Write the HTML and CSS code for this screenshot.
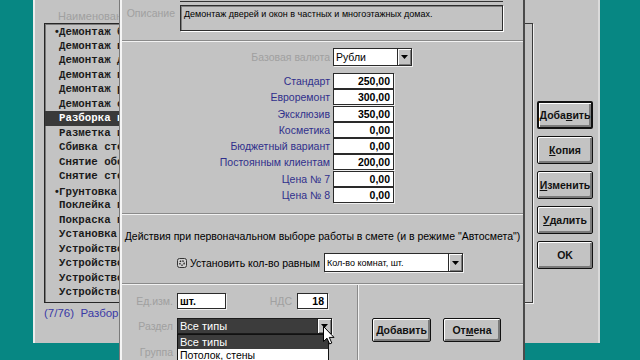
FILE: index.html
```html
<!DOCTYPE html>
<html lang="ru">
<head>
<meta charset="utf-8">
<title>Работы</title>
<link rel="stylesheet" href="styles.css">
</head>
<body>
<div class="desktop">
  <div class="win back">
    <div class="list-col">
      <div class="col-head">Наименован</div>
      <div class="listbox">
        <div class="item"><span class="dot">•</span>Демонтаж б</div>
        <div class="item">Демонтаж в</div>
        <div class="item">Демонтаж д</div>
        <div class="item">Демонтаж п</div>
        <div class="item">Демонтаж р</div>
        <div class="item">Демонтаж с</div>
        <div class="item sel">Разборка п</div>
        <div class="item">Разметка и</div>
        <div class="item">Сбивка сте</div>
        <div class="item">Снятие обо</div>
        <div class="item">Снятие сте</div>
        <div class="item"><span class="dot">•</span>Грунтовка</div>
        <div class="item">Поклейка п</div>
        <div class="item">Покраска п</div>
        <div class="item">Установка</div>
        <div class="item">Устройство</div>
        <div class="item">Устройство</div>
        <div class="item">Устройство</div>
        <div class="item">Устройство</div>
      </div>
      <div class="status">(7/76)&nbsp; Разбор</div>
    </div>
    <div class="frame"></div>
    <div class="btn-col">
      <div class="btn def">Доба<u>в</u>ить</div>
      <div class="btn"><u>К</u>опия</div>
      <div class="btn"><u>И</u>зменить</div>
      <div class="btn"><u>У</u>далить</div>
      <div class="btn">OK</div>
    </div>
  </div>

  <div class="win dlg">
    <div class="sec-top">
      <div class="name-stub"></div>
      <div class="desc-row">
        <div class="lbl dis">Описание</div>
        <div class="memo">Демонтаж дверей и окон в частных и многоэтажных домах.</div>
      </div>
    </div>
    <div class="sep"></div>
    <div class="prices">
      <div class="cur-row">
        <div class="lbl dis">Базовая валюта</div>
        <div class="combo cur"><span class="val">Рубли</span><span class="arr"><svg width="7" height="4" viewBox="0 0 7 4"><path d="M0 0H7L3.5 4Z" fill="#000"/></svg></span></div>
      </div>
      <div class="pgrid">
        <div class="lbl blue">Стандарт</div><div class="num">250,00</div>
        <div class="lbl blue">Евроремонт</div><div class="num">300,00</div>
        <div class="lbl blue">Эксклюзив</div><div class="num">350,00</div>
        <div class="lbl blue">Косметика</div><div class="num">0,00</div>
        <div class="lbl blue">Бюджетный вариант</div><div class="num">0,00</div>
        <div class="lbl blue">Постоянным клиентам</div><div class="num">200,00</div>
        <div class="lbl blue">Цена № 7</div><div class="num">0,00</div>
        <div class="lbl blue">Цена № 8</div><div class="num">0,00</div>
      </div>
    </div>
    <div class="sep"></div>
    <div class="actions">
      <p class="act-title">Действия при первоначальном выборе работы в смете (и в режиме "Автосмета")</p>
      <div class="chk-row">
        <svg class="chk" width="10" height="10" viewBox="0 0 10 10"><rect x="0.5" y="0.5" width="9" height="9" rx="2" fill="#d0d0d0" stroke="#333"/><circle cx="5" cy="5" r="2.2" fill="none" stroke="#222" stroke-width="1.3" stroke-dasharray="1.4 1"/></svg>
        <span class="chk-lbl">Установить кол-во равным</span>
        <div class="combo qty"><span class="val">Кол-во комнат, шт.</span><span class="arr"><svg width="7" height="4" viewBox="0 0 7 4"><path d="M0 0H7L3.5 4Z" fill="#000"/></svg></span></div>
      </div>
    </div>
    <div class="sep"></div>
    <div class="bottom">
      <div class="b-left">
        <div class="brow">
          <div class="lbl dis w53">Ед.изм.</div>
          <div class="field unit">шт.</div>
          <div class="lbl dis vat-lbl">НДС</div>
          <div class="field vat">18</div>
        </div>
        <div class="brow r2">
          <div class="lbl dis w53">Раздел</div>
          <div class="combo dark"><span class="val">Все типы</span><span class="arr"><svg width="7" height="4" viewBox="0 0 7 4"><path d="M0 0H7L3.5 4Z" fill="#000"/></svg></span></div>
        </div>
        <div class="brow r3">
          <div class="lbl dis w53">Группа</div>
        </div>
        <div class="droplist">
          <div class="opt on">Все типы</div>
          <div class="opt">Потолок, стены</div>
        </div>
      </div>
      <div class="vsep"></div>
      <div class="b-right">
        <div class="btn sm"><u>Д</u>обавить</div>
        <div class="btn sm">От<u>м</u>ена</div>
      </div>
    </div>
  </div>

  <svg class="cursor" width="12" height="19" viewBox="0 0 12 19"><path d="M0.5 0.5V15.5L4 12.2L6.6 18L8.8 17L6.3 11.4H11Z" fill="#fff" stroke="#000" stroke-width="1"/></svg>
</div>
</body>
</html>
```

FILE: styles.css
```css
* { box-sizing: border-box; }
html, body { margin: 0; padding: 0; }
body {
  width: 640px; height: 360px; overflow: hidden;
  background: #078783;
  font-family: "Liberation Sans", Arial, sans-serif;
  font-size: 10.5px; color: #000;
}
.desktop { position: relative; width: 640px; height: 360px; overflow: hidden; background: #078783; }
.win { position: absolute; background: #c3c3c3; }

/* back window */
.back {
  left: 33px; top: 0; width: 567px; height: 343px;
  display: flex;
  box-shadow: inset 2px 0 #ececec, inset -2px 0 #dadada;
}
.list-col { margin-left: 11px; width: 82px; flex: none; overflow: hidden; }
.col-head { height: 23px; padding: 10px 0 0 14px; line-height: 13px; color: #a0a0a0; font-size: 11px; white-space: nowrap; overflow: hidden; }
.listbox {
  width: 100px; height: 280px; border: 1px solid #262626;
  box-shadow: inset 1px 1px #7a7a7a;
  font-family: "Liberation Mono", "Courier New", monospace;
  font-weight: bold; font-size: 10.75px; overflow: hidden;
  color: #1a1a1a;
}
.item { height: 14.5px; line-height: 14.5px; padding-left: 14px; white-space: nowrap; overflow: hidden; }
.dot { display: inline-block; width: 4px; margin-left: -4px; font-family: "Liberation Sans", sans-serif; }
.item.sel { background: #3a3a3a; color: #fff; }
.status { margin-top: 3px; line-height: 14px; color: #3a3aa6; font-size: 11.5px; white-space: nowrap; }
.frame {
  flex: none; margin-left: 9px; width: 398px; margin-top: 23px; height: 280px;
  border: 1px solid #3a3a3a; box-shadow: 1px 1px #f0f0f0;
}
.btn-col { flex: none; margin-left: 4px; width: 56px; padding-top: 101px; display: flex; flex-direction: column; gap: 7px; }
.btn {
  height: 28px; width: 56px;
  display: flex; align-items: center; justify-content: center;
  font-weight: bold; font-size: 10.5px; color: #111;
  border: 1px solid #111; border-radius: 2px; background: #c3c3c3;
  box-shadow: inset 1px 1px #fff, inset -2px -2px #7b7b7b;
}
.btn.def { border-width: 2px; }
.btn u { text-decoration-thickness: 1px; text-underline-offset: 1px; }

/* front dialog */
.dlg {
  left: 120px; top: 0; width: 405px; height: 360px;
  box-shadow: inset 2px 0 #f4f4f4, inset -2px 0 #4a4a4a, -1px 0 #7a7a7a;
}
.lbl { white-space: nowrap; }
.dis { color: #a0a0a0; }
.blue { color: #30308c; }
.sec-top { height: 40px; }
.name-stub { margin-left: 60px; width: 323px; height: 2px; border-bottom: 1px solid #333; }
.desc-row { display: flex; margin-top: 3px; }
.desc-row .lbl { width: 55px; text-align: right; padding-top: 2px; margin-right: 5px; line-height: 13px; }
.memo {
  width: 323px; height: 26px; border: 1px solid #2d2d2d;
  box-shadow: inset 1px 1px #808080, 1px 1px #fff;
  font-size: 9px; padding: 3px 3px; line-height: 11px;
}
.sep { height: 2px; border-top: 1px solid #8a8a8a; border-bottom: 1px solid #f2f2f2; margin: 0 2px; }

.prices { height: 171px; padding-top: 6px; }
.cur-row { display: flex; align-items: center; height: 18px; }
.cur-row .lbl { width: 210px; text-align: right; margin-right: 3px; }
.combo { display: flex; border: 1px solid #2a2a2a; background: #fff; box-shadow: 1px 1px #f0f0f0; }
.combo .val { flex: 1; padding-left: 2px; white-space: nowrap; overflow: hidden; display: flex; align-items: center; }
.combo .arr {
  width: 14px; flex: none; border-left: 1px solid #2a2a2a; background: #c3c3c3;
  display: flex; align-items: center; justify-content: center;
  box-shadow: inset 1px 1px #fff, inset -1px -1px #7b7b7b;
}
.combo.cur { width: 79px; height: 18px; }
.pgrid { display: grid; grid-template-columns: 210px 61px; column-gap: 3px; grid-auto-rows: 16.25px; margin-top: 7px; }
.pgrid .lbl { text-align: right; line-height: 16px; }
.num {
  height: 16px; border: 1px solid #2a2a2a; background: #fff;
  text-align: right; font-weight: bold; padding-right: 3px; line-height: 14px;
  box-shadow: 1px 1px #f0f0f0;
}

.actions { height: 68px; padding-top: 15px; }
.act-title { margin: 0; text-align: center; line-height: 13px; white-space: nowrap; }
.chk-row { display: flex; align-items: center; margin-top: 10px; padding-left: 57px; height: 19px; }
.chk { flex: none; margin-right: 3px; }
.chk-lbl { white-space: nowrap; }
.combo.qty { width: 139px; height: 19px; margin-left: 4px; font-size: 9px; }

.bottom { display: flex; height: 75px; }
.b-left { width: 237px; padding-top: 8px; position: relative; flex: none; }
.brow { display: flex; align-items: center; height: 16px; }
.brow.r2 { margin-top: 9px; }
.brow.r3 { margin-top: 10px; }
.w53 { width: 53px; text-align: right; margin-right: 4px; }
.field { height: 16px; border: 1px solid #2a2a2a; background: #fff; font-weight: bold; line-height: 14px; box-shadow: 1px 1px #f0f0f0; }
.unit { width: 49px; padding-left: 2px; }
.vat-lbl { width: 66px; text-align: right; margin-right: 5px; }
.vat { width: 31px; text-align: right; padding-right: 3px; }
.combo.dark { width: 155px; height: 16px; background: #3c3c3c; color: #fff; border-color: #1a1a1a; font-size: 11px; }
.droplist {
  position: absolute; left: 57px; top: 49px; width: 152px; height: 26px;
  border: 1px solid #111; border-bottom: 0; background: #fff; font-size: 10.5px;
}
.opt { height: 14px; line-height: 14px; padding-left: 2px; white-space: nowrap; }
.opt + .opt { height: 11px; line-height: 13px; overflow: hidden; }
.opt.on { background: #3c3c3c; color: #fff; font-size: 11px; }
.vsep { width: 2px; flex: none; border-left: 1px solid #8a8a8a; border-right: 1px solid #f2f2f2; }
.b-right { flex: 1; display: flex; padding-top: 33px; padding-left: 13px; gap: 12px; align-items: flex-start; }
.btn.sm { height: 24px; width: 59px; }
.btn.sm + .btn.sm { width: 58px; }

.cursor { position: absolute; left: 323px; top: 326px; }
```
